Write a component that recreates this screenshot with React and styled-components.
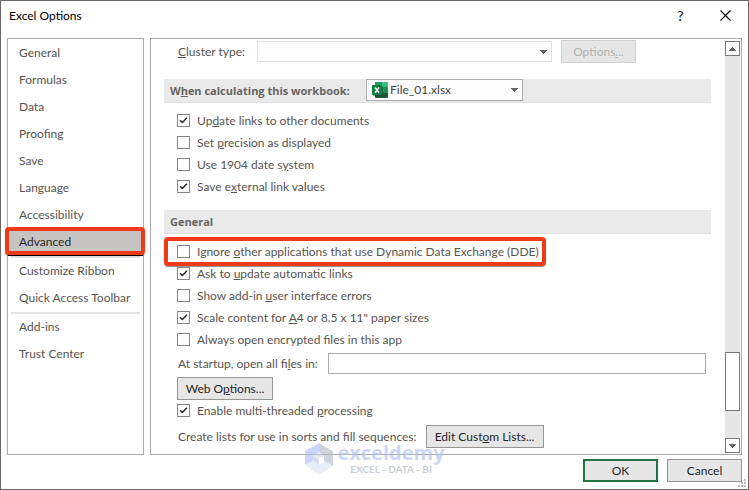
import React, { useState } from 'react';
import styled, { createGlobalStyle } from 'styled-components';

const GlobalStyle = createGlobalStyle`
  * {
    box-sizing: border-box;
  }

  body {
    margin: 0;
    background: #fff;
  }

  body, button, input, select {
    font-family: Lato, 'Open Sans', sans-serif;
    font-size: 12px;
    line-height: 16px;
    color: #57544f;
  }
`;

const Dialog = styled.div`
  position: relative;
  display: flex;
  flex-direction: column;
  min-height: 100vh;
  background: #fff;
  border: 1px solid #6a696a;
`;

const TitleBar = styled.header`
  display: flex;
  align-items: center;
  height: 37px;
  padding: 0 0 8px 8px;
`;

const Title = styled.h1`
  flex: 1;
  margin: 0;
  font-size: 12px;
  font-weight: 400;
  color: #000;
`;

const TitleButton = styled.button`
  display: flex;
  align-items: center;
  justify-content: center;
  width: 45px;
  height: 28px;
  padding: 0;
  border: none;
  background: none;
  color: #000;
  font-size: 14px;
`;

const Body = styled.div`
  flex: 1;
  display: grid;
  grid-template-columns: 137px minmax(0, 1fr);
  gap: 6px;
  padding: 0 6px;
`;

const Nav = styled.nav`
  padding-top: 1px;
  border: 1px solid #ababab;
`;

const NavList = styled.ul`
  margin: 0;
  padding: 0;
  list-style: none;
`;

const NavItem = styled.li`
  position: relative;
`;

const NavButton = styled.button`
  display: block;
  width: 100%;
  height: 27px;
  padding: 0 11px 1px;
  border: none;
  border-bottom: ${(props) => (props.$active ? '1px solid #000' : 'none')};
  background: ${(props) => (props.$active ? '#c6c4c3' : 'transparent')};
  color: ${(props) => (props.$active ? '#262626' : '#57544f')};
  text-align: left;
  white-space: nowrap;
`;

const NavDivider = styled.li`
  height: 2px;
  margin: 0 3px;
  background: #e3e3e3;
`;

const Marker = styled.span`
  position: absolute;
  inset: ${(props) => props.$inset};
  border: 4px solid #f03a17;
  border-radius: 4px;
  box-shadow: 0 1px 1px rgba(0, 0, 0, 0.45);
  pointer-events: none;
`;

const Panel = styled.main`
  display: flex;
  border: 1px solid #ababab;
`;

const PanelContent = styled.div`
  flex: 1;
  min-width: 0;
  padding: 1px 14px 6px 13px;
`;

const Row = styled.div`
  display: flex;
  align-items: center;
  gap: ${(props) => props.$gap || 0}px;
  margin-top: ${(props) => props.$top || 0}px;
  padding: 0 5px 0 ${(props) => props.$indent || 14}px;
`;

const Label = styled.label`
  min-width: ${(props) => props.$width || 0}px;
  white-space: nowrap;
`;

const Section = styled.section`
  margin-top: ${(props) => props.$top}px;
`;

const SectionHeader = styled.div`
  display: flex;
  align-items: flex-start;
  height: 24px;
  margin-bottom: 7px;
  padding-left: 6px;
  background: #eaeaea;
  border-bottom: 1px solid #e0e0e0;
`;

const SectionTitle = styled.h2`
  min-width: 196px;
  margin: 0;
  font-family: 'Open Sans', sans-serif;
  font-size: 11px;
  line-height: 23px;
  font-weight: 700;
  color: #686562;
`;

const CheckRow = styled.label`
  position: relative;
  display: flex;
  align-items: center;
  gap: 7px;
  width: fit-content;
  height: 22px;
  margin-left: 13px;
  padding-bottom: 1px;
  white-space: nowrap;
`;

const CheckBoxWrap = styled.span`
  display: grid;
  width: 13px;
  height: 13px;

  > * {
    grid-area: 1 / 1;
  }
`;

const CheckInput = styled.input`
  appearance: none;
  width: 13px;
  height: 13px;
  margin: 0;
  border: 1px solid #868686;
  background: #fff;
`;

const SelectWrap = styled.div`
  position: relative;
  width: ${(props) => props.$width}px;
`;

const SelectBox = styled.select`
  display: block;
  appearance: none;
  width: 100%;
  height: ${(props) => (props.$icon ? 22 : 21)}px;
  padding: 0 20px 0 ${(props) => (props.$icon ? 23 : 5)}px;
  border: 1px solid ${(props) => (props.disabled ? '#e1e1e1' : '#ababab')};
  border-radius: 0;
  background: #fdfdfd;
  color: #444;
  opacity: 1;
`;

const SelectArrow = styled.span`
  position: absolute;
  top: 0;
  right: 5px;
  bottom: 0;
  display: flex;
  align-items: center;
  pointer-events: none;
`;

const SelectIcon = styled.span`
  position: absolute;
  left: 6px;
  top: 3px;
  height: 16px;
  pointer-events: none;
`;

const Button = styled.button`
  min-width: ${(props) => props.$width || 75}px;
  height: 23px;
  padding: 0 7px;
  border: ${(props) => (props.$primary ? '2px solid #217346' : '1px solid #969696')};
  background: #e6e6e6;
  color: #262626;
  white-space: nowrap;

  &:disabled {
    border-color: #d0d0d0;
    background: #e6e6e6;
    color: #b1b1b1;
  }
`;

const TextInput = styled.input`
  flex: 1;
  min-width: 0;
  height: 21px;
  padding: 0 4px;
  border: 1px solid #ababab;
  background: #fff;
`;

const ScrollBar = styled.div`
  display: flex;
  flex-direction: column;
  width: 15px;
  margin: 2px 1px 1px 0;
  background: #e6e6e6;
`;

const ScrollButton = styled.button`
  display: flex;
  align-items: center;
  justify-content: center;
  width: 15px;
  height: 15px;
  padding: 0;
  border: 1px solid #777;
  background: #fff;
`;

const ScrollTrack = styled.div`
  flex: 1;
  display: flex;
  flex-direction: column;
  justify-content: flex-end;
  padding-bottom: 27px;
`;

const ScrollThumb = styled.div`
  height: 59px;
  border: 1px solid #777;
  background: #fff;
`;

const Footer = styled.footer`
  display: flex;
  justify-content: flex-end;
  gap: 9px;
  padding: 4px 6px 7px;
`;

const Grip = styled.svg`
  position: absolute;
  right: 2px;
  bottom: 2px;
`;

const Watermark = styled.div`
  position: absolute;
  left: 50%;
  bottom: 14px;
  display: flex;
  align-items: center;
  gap: 5px;
  transform: translateX(-50%);
  opacity: 0.6;
  pointer-events: none;
`;

const WatermarkText = styled.div`
  display: flex;
  flex-direction: column;
  align-items: center;
  font-weight: 700;
`;

const WatermarkName = styled.span`
  font-family: 'Open Sans', sans-serif;
  font-size: 20px;
  line-height: 20px;
  color: #a9bdf0;
`;

const WatermarkTag = styled.span`
  font-size: 10px;
  line-height: 12px;
  color: #a9afba;
`;

const Arrow = ({ up }) => (
  <svg width="7" height="4" viewBox="0 0 7 4" shapeRendering="crispEdges">
    <path d={up ? 'M0 4L3.5 0L7 4Z' : 'M0 0H7L3.5 4Z'} fill="#666" />
  </svg>
);

const ExcelIcon = () => (
  <svg width="16" height="16" viewBox="0 0 16 16">
    <path d="M3 0h7v5H3z" fill="#21a366" />
    <path d="M10 0h5a1 1 0 0 1 1 1v4h-6z" fill="#33c481" />
    <path d="M3 5h7v6H3z" fill="#107c41" />
    <path d="M10 5h6v6h-6z" fill="#21a366" />
    <path d="M3 11h13v4a1 1 0 0 1-1 1H4a1 1 0 0 1-1-1z" fill="#185c37" />
    <path d="M10 5h6v6h-6z" fill="#107c41" opacity="0.5" />
    <rect x="1" y="4" width="10" height="10" fill="#0b4a28" opacity="0.5" />
    <rect x="0" y="3" width="10" height="10" rx="1" fill="#107c41" />
    <path d="M3 5.5l4 5.2M7 5.5l-4 5.2" stroke="#fff" strokeWidth="1.5" />
  </svg>
);

const CubeLogo = () => (
  <svg width="28" height="32" viewBox="0 0 28 32">
    <path d="M14 0L0 8v14l8-4V13l6-4z" fill="#a9bdf8" />
    <path d="M14 0l14 8v15l-9-5v-5l-5-4z" fill="#b0b6c2" />
    <path d="M0 22l8-4 6 4 5-4 9 5-14 9z" fill="#dbe5f4" />
    <path d="M8 13l6-4 5 4-5 3z" fill="#d5dae6" />
    <path d="M8 13l6 3v6l-6-4z" fill="#bcc8e8" />
    <path d="M19 13l-5 3v6l5-4z" fill="#fff" />
  </svg>
);

const CheckOption = ({ children, defaultChecked, highlighted }) => {
  const [checked, setChecked] = useState(Boolean(defaultChecked));

  return (
    <CheckRow>
      <CheckBoxWrap>
        <CheckInput
          type="checkbox"
          checked={checked}
          onChange={() => setChecked(!checked)}
        />
        {checked && (
          <svg width="13" height="13" viewBox="0 0 13 13" pointerEvents="none">
            <path d="M3 6.2L5.3 8.5L10 3.8" fill="none" stroke="#222" strokeWidth="1.4" />
          </svg>
        )}
      </CheckBoxWrap>
      <span>{children}</span>
      {highlighted && <Marker $inset="-4px -7px -3px -13px" />}
    </CheckRow>
  );
};

const navGroups = [
  ['General', 'Formulas', 'Data', 'Proofing', 'Save', 'Language', 'Accessibility', 'Advanced'],
  ['Customize Ribbon', 'Quick Access Toolbar'],
  ['Add-ins', 'Trust Center'],
];

const App = () => {
  const [page, setPage] = useState('Advanced');

  return (
    <>
      <GlobalStyle />
      <Dialog role="dialog" aria-labelledby="dialog-title">
        <TitleBar>
          <Title id="dialog-title">Excel Options</Title>
          <TitleButton type="button">?</TitleButton>
          <TitleButton type="button" aria-label="Close">
            <svg width="11" height="11" viewBox="0 0 11 11">
              <path d="M0.5 0.5l10 10M10.5 0.5l-10 10" stroke="#000" strokeWidth="1.1" />
            </svg>
          </TitleButton>
        </TitleBar>

        <Body>
          <Nav>
            <NavList>
              {navGroups.map((group, index) => (
                <React.Fragment key={group[0]}>
                  {index > 0 && <NavDivider role="separator" />}
                  {group.map((name) => (
                    <NavItem key={name}>
                      <NavButton
                        type="button"
                        $active={name === page}
                        onClick={() => setPage(name)}
                      >
                        {name}
                      </NavButton>
                      {name === page && <Marker $inset="-2px -2px 1px -3px" />}
                    </NavItem>
                  ))}
                </React.Fragment>
              ))}
            </NavList>
          </Nav>

          <Panel>
            <PanelContent>
              <Row $gap={9}>
                <Label htmlFor="cluster" $width={70}><u>C</u>luster type:</Label>
                <SelectWrap $width={295}>
                  <SelectBox id="cluster" disabled />
                  <SelectArrow><Arrow /></SelectArrow>
                </SelectWrap>
                <Button type="button" disabled>Options<u>.</u>..</Button>
              </Row>

              <Section $top={16}>
                <SectionHeader>
                  <SectionTitle>
                    <label htmlFor="workbook">W<u>h</u>en calculating this workbook:</label>
                  </SectionTitle>
                  <SelectWrap $width={157}>
                    <SelectBox id="workbook" $icon>
                      <option>File_01.xlsx</option>
                    </SelectBox>
                    <SelectIcon><ExcelIcon /></SelectIcon>
                    <SelectArrow><Arrow /></SelectArrow>
                  </SelectWrap>
                </SectionHeader>
                <CheckOption defaultChecked>Up<u>d</u>ate links to other documents</CheckOption>
                <CheckOption>Set <u>p</u>recision as displayed</CheckOption>
                <CheckOption>Use 1904 date s<u>y</u>stem</CheckOption>
                <CheckOption defaultChecked>Save e<u>x</u>ternal link values</CheckOption>
              </Section>

              <Section $top={12}>
                <SectionHeader>
                  <SectionTitle>General</SectionTitle>
                </SectionHeader>
                <CheckOption highlighted>
                  Ignore <u>o</u>ther applications that use Dynamic Data Exchange (DDE)
                </CheckOption>
                <CheckOption defaultChecked>Ask to <u>u</u>pdate automatic links</CheckOption>
                <CheckOption>Show add-in <u>u</u>ser interface errors</CheckOption>
                <CheckOption defaultChecked>
                  Scale content for <u>A</u>4 or 8.5 x 11" paper sizes
                </CheckOption>
                <CheckOption>Always open encrypted files in this app</CheckOption>
                <Row $gap={10} $top={2}>
                  <Label htmlFor="startup" $width={140}>At startup, open all fi<u>l</u>es in:</Label>
                  <TextInput id="startup" type="text" />
                </Row>
                <Row $top={3} $indent={13}>
                  <Button type="button" $width={96}>Web O<u>p</u>tions...</Button>
                </Row>
                <CheckOption defaultChecked>
                  Enable multi-threaded <u>p</u>rocessing
                </CheckOption>
                <Row $top={3} $gap={9}>
                  <span>Create lists for use in sorts and fill sequences:</span>
                  <Button type="button" $width={118}>Edit Cust<u>o</u>m Lists...</Button>
                </Row>
              </Section>
            </PanelContent>

            <ScrollBar>
              <ScrollButton type="button" aria-label="Scroll up"><Arrow up /></ScrollButton>
              <ScrollTrack>
                <ScrollThumb />
              </ScrollTrack>
              <ScrollButton type="button" aria-label="Scroll down"><Arrow /></ScrollButton>
            </ScrollBar>
          </Panel>
        </Body>

        <Footer>
          <Button type="button" $primary>OK</Button>
          <Button type="button">Cancel</Button>
        </Footer>

        <Watermark>
          <CubeLogo />
          <WatermarkText>
            <WatermarkName>exceldemy</WatermarkName>
            <WatermarkTag>EXCEL - DATA - BI</WatermarkTag>
          </WatermarkText>
        </Watermark>

        <Grip width="8" height="8" viewBox="0 0 8 8" fill="#bdbdbd" shapeRendering="crispEdges">
          <path d="M6 0h2v2h-2zM3 3h2v2h-2zM6 3h2v2h-2zM0 6h2v2h-2zM3 6h2v2h-2zM6 6h2v2h-2z" />
        </Grip>
      </Dialog>
    </>
  );
};

export default App;
